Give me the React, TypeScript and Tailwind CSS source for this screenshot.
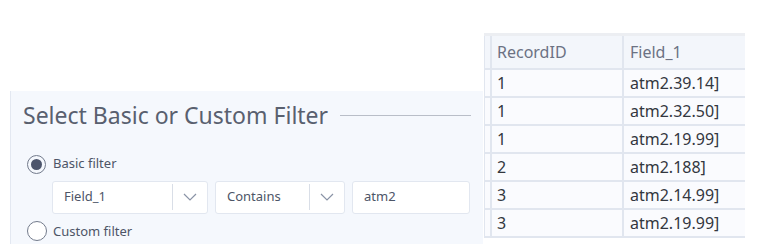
import React from "react";

const Chevron = () => (
  <svg width="14" height="8" viewBox="0 0 14 8" fill="none">
    <path d="M1 1l6 6 6-6" stroke="#8a93a6" strokeWidth="1.2" />
  </svg>
);

const rows = [
  ["1", "atm2.39.14]"],
  ["1", "atm2.32.50]"],
  ["1", "atm2.19.99]"],
  ["2", "atm2.188]"],
  ["3", "atm2.14.99]"],
  ["3", "atm2.19.99]"],
];

export default function App() {
  return (
    <div
      className="w-[758px] h-[251px] bg-white flex overflow-hidden"
      style={{ fontFamily: '"Noto Sans", "Open Sans", sans-serif' }}
    >
      <div className="ml-[10px] mt-[91px] w-[473px] h-[153px] bg-[#f5f8fd] border-l border-[#e3e8f1] flex flex-col">
        <div className="flex items-center h-[50px] pl-[12px] pr-[12px]">
          <span className="text-[23px] text-[#59606f] leading-none">Select Basic or Custom Filter</span>
          <div className="flex-1 h-px bg-[#b9bec8] ml-[12px]" />
        </div>
        <div className="flex items-center pl-[16px] mt-[11px] h-[28px]">
          <div className="w-[19px] h-[19px] rounded-full border-[1.5px] border-[#737b8c] flex items-center justify-center">
            <div className="w-[11px] h-[11px] rounded-full bg-[#4c556c]" />
          </div>
          <span className="ml-[7px] text-[13px] text-[#4d5567]">Basic filter</span>
        </div>
        <div className="flex pl-[41px] mt-[3px] gap-[7px] h-[34px]">
          <div className="w-[156px] bg-white border border-[#e2e7f0] rounded-[3px] flex items-center">
            <span className="flex-1 pl-[11px] text-[13px] text-[#4d5567]">Field_1</span>
            <div className="w-px h-[26px] bg-[#d9dee7]" />
            <div className="w-[34px] flex justify-center"><Chevron /></div>
          </div>
          <div className="w-[130px] bg-white border border-[#e2e7f0] rounded-[3px] flex items-center">
            <span className="flex-1 pl-[11px] text-[13px] text-[#4d5567]">Contains</span>
            <div className="w-px h-[26px] bg-[#d9dee7]" />
            <div className="w-[34px] flex justify-center"><Chevron /></div>
          </div>
          <div className="w-[118px] bg-white border border-[#e2e7f0] rounded-[3px] flex items-center">
            <span className="pl-[11px] text-[13px] text-[#4d5567]">atm2</span>
          </div>
        </div>
        <div className="flex items-center pl-[16px] mt-[5px] h-[26px]">
          <div className="w-[20px] h-[20px] rounded-full border-[1.5px] border-[#737b8c] bg-white" />
          <span className="ml-[6px] text-[13px] text-[#4d5567]">Custom filter</span>
        </div>
      </div>

      <div className="ml-[1px] mt-[33px] w-[261px] h-[208px] flex flex-col border-t-[3px] border-[#eceef2]">
        <div className="flex h-[34px] bg-[#f3f6fb] border-b-2 border-[#e1e6ef]">
          <div className="w-[8px] border-l border-r-2 border-[#e1e6ef]" />
          <div className="w-[132px] border-r-2 border-[#e1e6ef] flex items-center pl-[5px] text-[16px] text-[#6c7283]">RecordID</div>
          <div className="flex-1 flex items-center pl-[6px] text-[16px] text-[#6c7283]">Field_1</div>
        </div>
        {rows.map((r, i) => (
          <div key={i} className="flex h-[28px] bg-[#fafbfe] border-b-2 border-[#e1e6ef]">
            <div className="w-[8px] border-l border-r-2 border-[#e1e6ef]" />
            <div className="w-[132px] border-r-2 border-[#e1e6ef] flex items-center pl-[5px] text-[16px] text-[#33373f]">{r[0]}</div>
            <div className="flex-1 flex items-center pl-[6px] text-[16px] text-[#33373f]">{r[1]}</div>
          </div>
        ))}
      </div>
    </div>
  );
}
